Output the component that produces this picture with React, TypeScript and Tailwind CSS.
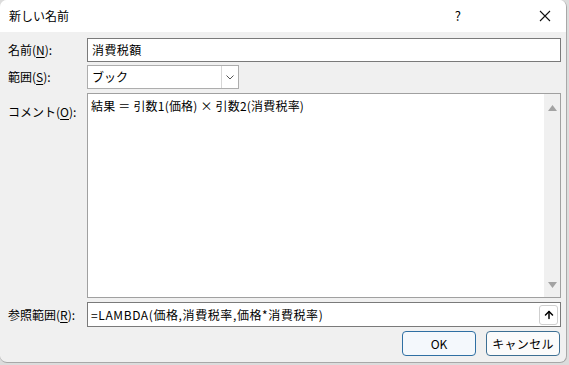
import { ArrowUp } from "lucide-react";

const font = { fontFamily: '"Noto Sans CJK JP", "Noto Sans", sans-serif' };

const Label = ({ text, hot, rest }: { text: string; hot: string; rest: string }) => (
  <span className="text-[12px] leading-none text-black">
    {text}(<span className="underline underline-offset-2">{hot}</span>){rest}
  </span>
);

export default function App() {
  return (
    <div className="w-[569px] h-[365px] bg-[#dcdcdc]" style={font}>
      <div className="w-[567px] h-[363px] rounded-[7px] border-r border-b border-[#a8a8a8] overflow-hidden flex flex-col bg-[#f0f0f0]">
        {/* title bar */}
        <div className="h-[32px] bg-white flex items-center pl-[9px] pr-[14px] shrink-0">
          <span className="text-[12px] text-black">新しい名前</span>
          <span className="ml-auto text-[13px] text-black mr-[78px]">?</span>
          <svg width="12" height="12" viewBox="0 0 12 12" className="mr-[1px]">
            <path d="M1 1L11 11M11 1L1 11" stroke="#111" strokeWidth="1.1" />
          </svg>
        </div>

        {/* body */}
        <div className="flex flex-col pl-[8px] pr-[5px] pt-[6px]">
          <div className="grid grid-cols-[79px_1fr] gap-y-[3px]">
            <div className="h-[24px] flex items-center">
              <Label text="名前" hot="N" rest=":" />
            </div>
            <div className="h-[24px] bg-white border border-[#7a7a7a] flex items-center px-[4px] text-[12px] text-black tracking-[0.4px]">
              消費税額
            </div>

            <div className="h-[24px] flex items-center">
              <Label text="範囲" hot="S" rest=":" />
            </div>
            <div className="h-[24px] w-[152px] bg-white border border-[#adadad] flex items-center text-[12px] text-black">
              <span className="pl-[4px] flex-1">ブック</span>
              <span className="w-[17px] h-full border-l border-[#d6d6d6] flex items-center justify-center">
                <svg width="8" height="5" viewBox="0 0 8 5">
                  <path d="M0.5 0.5L4 4L7.5 0.5" stroke="#555" fill="none" strokeWidth="1" />
                </svg>
              </span>
            </div>
          </div>

          <div className="grid grid-cols-[79px_1fr] mt-[4px]">
            <div className="pt-[5px]">
              <Label text="コメント" hot="O" rest=":" />
            </div>
            <div className="h-[205px] bg-white border border-[#a0a0a0] flex">
              <div className="flex-1 px-[3px] pt-[6px] text-[12px] text-black leading-none whitespace-pre tracking-[0.2px]">
                結果 ＝ 引数1(価格) × 引数2(消費税率)
              </div>
              <div className="w-[16px] bg-[#f0f0f0] flex flex-col items-center justify-between pt-[11px] pb-[9px]">
                <svg width="9" height="6" viewBox="0 0 9 6">
                  <path d="M4.5 0L9 6H0Z" fill="#a3a3a3" />
                </svg>
                <svg width="9" height="6" viewBox="0 0 9 6">
                  <path d="M0 0H9L4.5 6Z" fill="#a3a3a3" />
                </svg>
              </div>
            </div>
          </div>

          <div className="grid grid-cols-[79px_1fr] mt-[4px]">
            <div className="h-[25px] flex items-center">
              <Label text="参照範囲" hot="R" rest=":" />
            </div>
            <div className="h-[25px] bg-white border border-[#7a7a7a] flex items-center pl-[3px] pr-[2px] text-[12px] text-black">
              <span className="flex-1 tracking-[0.6px]">=LAMBDA(価格,消費税率,価格*消費税率)</span>
              <span className="w-[19px] h-[20px] rounded-[3px] border border-[#cfcfcf] bg-white flex items-center justify-center">
                <ArrowUp size={12} strokeWidth={3} color="#000" />
              </span>
            </div>
          </div>

          <div className="flex justify-end gap-[10px] mt-[4px] pr-[1px]">
            <button className="w-[74px] h-[25px] rounded-[4px] border border-[#2e6fa3] bg-[#f4f8fc] text-[12px] text-black">
              OK
            </button>
            <button className="w-[74px] h-[25px] rounded-[4px] border border-[#3d6f93] bg-[#fbfbfb] text-[12px] text-black tracking-[0.3px]">
              キャンセル
            </button>
          </div>
        </div>
      </div>
    </div>
  );
}
